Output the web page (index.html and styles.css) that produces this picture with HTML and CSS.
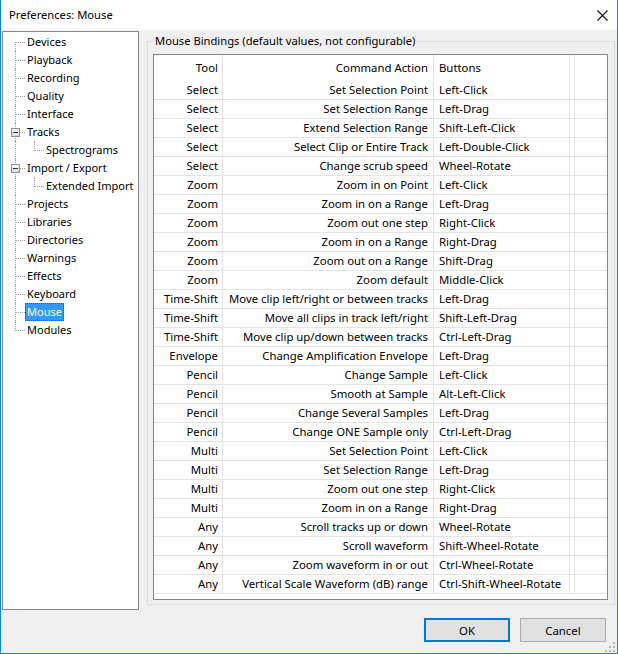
FILE: index.html
```html
<!DOCTYPE html>
<html>
<head>
<meta charset="utf-8">
<title>Preferences: Mouse</title>
<link rel="stylesheet" href="styles.css">
</head>
<body>
<div class="window">
  <div class="titlebar">
    <span class="title">Preferences: Mouse</span>
    <svg class="close" width="11" height="11" viewBox="0 0 11 11"><path d="M0.5 0.5 L10.5 10.5 M10.5 0.5 L0.5 10.5" stroke="#111" stroke-width="1.1" fill="none"/></svg>
  </div>
  <div class="main">
    <div class="tree">
      <div class="node first"><span class="h"></span><span class="lbl">Devices</span></div>
      <div class="node"><span class="h"></span><span class="lbl">Playback</span></div>
      <div class="node"><span class="h"></span><span class="lbl">Recording</span></div>
      <div class="node"><span class="h"></span><span class="lbl">Quality</span></div>
      <div class="node"><span class="h"></span><span class="lbl">Interface</span></div>
      <div class="node"><span class="h"></span><span class="box"></span><span class="lbl">Tracks</span></div>
      <div class="node child"><span class="elbow"></span><span class="lbl">Spectrograms</span></div>
      <div class="node"><span class="h"></span><span class="box"></span><span class="lbl">Import / Export</span></div>
      <div class="node child"><span class="elbow"></span><span class="lbl">Extended Import</span></div>
      <div class="node"><span class="h"></span><span class="lbl">Projects</span></div>
      <div class="node"><span class="h"></span><span class="lbl">Libraries</span></div>
      <div class="node"><span class="h"></span><span class="lbl">Directories</span></div>
      <div class="node"><span class="h"></span><span class="lbl">Warnings</span></div>
      <div class="node"><span class="h"></span><span class="lbl">Effects</span></div>
      <div class="node"><span class="h"></span><span class="lbl">Keyboard</span></div>
      <div class="node"><span class="h"></span><span class="lbl sel">Mouse</span></div>
      <div class="node last"><span class="h"></span><span class="lbl">Modules</span></div>
    </div>
    <fieldset class="group">
      <legend>Mouse Bindings (default values, not configurable)</legend>
      <div class="list">
        <div class="grid">
          <div class="c t hd">Tool</div><div class="c a hd">Command Action</div><div class="c b hd">Buttons</div><div class="c x hd"></div><div class="c y hd"></div>

          <div class="c t">Select</div><div class="c a">Set Selection Point</div><div class="c b">Left-Click</div><div class="c x"></div><div class="c y"></div>
          <div class="c t">Select</div><div class="c a">Set Selection Range</div><div class="c b">Left-Drag</div><div class="c x"></div><div class="c y"></div>
          <div class="c t">Select</div><div class="c a">Extend Selection Range</div><div class="c b">Shift-Left-Click</div><div class="c x"></div><div class="c y"></div>
          <div class="c t">Select</div><div class="c a">Select Clip or Entire Track</div><div class="c b">Left-Double-Click</div><div class="c x"></div><div class="c y"></div>
          <div class="c t">Select</div><div class="c a">Change scrub speed</div><div class="c b">Wheel-Rotate</div><div class="c x"></div><div class="c y"></div>
          <div class="c t">Zoom</div><div class="c a">Zoom in on Point</div><div class="c b">Left-Click</div><div class="c x"></div><div class="c y"></div>
          <div class="c t">Zoom</div><div class="c a">Zoom in on a Range</div><div class="c b">Left-Drag</div><div class="c x"></div><div class="c y"></div>
          <div class="c t">Zoom</div><div class="c a">Zoom out one step</div><div class="c b">Right-Click</div><div class="c x"></div><div class="c y"></div>
          <div class="c t">Zoom</div><div class="c a">Zoom in on a Range</div><div class="c b">Right-Drag</div><div class="c x"></div><div class="c y"></div>
          <div class="c t">Zoom</div><div class="c a">Zoom out on a Range</div><div class="c b">Shift-Drag</div><div class="c x"></div><div class="c y"></div>
          <div class="c t">Zoom</div><div class="c a">Zoom default</div><div class="c b">Middle-Click</div><div class="c x"></div><div class="c y"></div>
          <div class="c t">Time-Shift</div><div class="c a">Move clip left/right or between tracks</div><div class="c b">Left-Drag</div><div class="c x"></div><div class="c y"></div>
          <div class="c t">Time-Shift</div><div class="c a">Move all clips in track left/right</div><div class="c b">Shift-Left-Drag</div><div class="c x"></div><div class="c y"></div>
          <div class="c t">Time-Shift</div><div class="c a">Move clip up/down between tracks</div><div class="c b">Ctrl-Left-Drag</div><div class="c x"></div><div class="c y"></div>
          <div class="c t">Envelope</div><div class="c a">Change Amplification Envelope</div><div class="c b">Left-Drag</div><div class="c x"></div><div class="c y"></div>
          <div class="c t">Pencil</div><div class="c a">Change Sample</div><div class="c b">Left-Click</div><div class="c x"></div><div class="c y"></div>
          <div class="c t">Pencil</div><div class="c a">Smooth at Sample</div><div class="c b">Alt-Left-Click</div><div class="c x"></div><div class="c y"></div>
          <div class="c t">Pencil</div><div class="c a">Change Several Samples</div><div class="c b">Left-Drag</div><div class="c x"></div><div class="c y"></div>
          <div class="c t">Pencil</div><div class="c a">Change ONE Sample only</div><div class="c b">Ctrl-Left-Drag</div><div class="c x"></div><div class="c y"></div>
          <div class="c t">Multi</div><div class="c a">Set Selection Point</div><div class="c b">Left-Click</div><div class="c x"></div><div class="c y"></div>
          <div class="c t">Multi</div><div class="c a">Set Selection Range</div><div class="c b">Left-Drag</div><div class="c x"></div><div class="c y"></div>
          <div class="c t">Multi</div><div class="c a">Zoom out one step</div><div class="c b">Right-Click</div><div class="c x"></div><div class="c y"></div>
          <div class="c t">Multi</div><div class="c a">Zoom in on a Range</div><div class="c b">Right-Drag</div><div class="c x"></div><div class="c y"></div>
          <div class="c t">Any</div><div class="c a">Scroll tracks up or down</div><div class="c b">Wheel-Rotate</div><div class="c x"></div><div class="c y"></div>
          <div class="c t">Any</div><div class="c a">Scroll waveform</div><div class="c b">Shift-Wheel-Rotate</div><div class="c x"></div><div class="c y"></div>
          <div class="c t">Any</div><div class="c a">Zoom waveform in or out</div><div class="c b">Ctrl-Wheel-Rotate</div><div class="c x"></div><div class="c y"></div>
          <div class="c t">Any</div><div class="c a">Vertical Scale Waveform (dB) range</div><div class="c b">Ctrl-Shift-Wheel-Rotate</div><div class="c x"></div><div class="c y"></div>
        </div>
      </div>
    </fieldset>
  </div>
  <div class="footer">
    <button class="btn default">OK</button>
    <button class="btn">Cancel</button>
  </div>
  <svg class="grip" width="12" height="12" viewBox="0 0 12 12">
    <g fill="#b8b8b8">
      <rect x="10" y="2" width="2" height="2"/>
      <rect x="6" y="6" width="2" height="2"/><rect x="10" y="6" width="2" height="2"/>
      <rect x="2" y="10" width="2" height="2"/><rect x="6" y="10" width="2" height="2"/><rect x="10" y="10" width="2" height="2"/>
    </g>
  </svg>
</div>
</body>
</html>
```
FILE: styles.css
```css
* { box-sizing: border-box; }
html, body { margin: 0; padding: 0; }
body {
  font-family: "Noto Sans", "Liberation Sans", sans-serif;
  font-size: 11px;
  color: #000;
  background: #fff;
}
.window {
  position: relative;
  width: 618px;
  height: 654px;
  background: #f0f0f0;
  border-left: 1px solid #1a83d8;
  border-right: 1px solid #1a83d8;
  border-bottom: 1px solid #1a83d8;
  display: flex;
  flex-direction: column;
}
.titlebar {
  height: 30px;
  background: #fff;
  display: flex;
  align-items: center;
  justify-content: space-between;
  padding: 0 9px 0 8px;
  flex: none;
}
.title { font-size: 11.2px; line-height: 16px; }
.close { display: block; }

.main {
  height: 580px;
  display: flex;
  align-items: flex-start;
  flex: none;
}
.tree {
  width: 137px;
  height: 579px;
  margin: 1px 0 0 1px;
  background: #fff;
  border: 1px solid #828790;
  padding-top: 1px;
}
.node {
  position: relative;
  height: 18px;
  padding-left: 22px;
  display: flex;
  align-items: center;
}
.node::before {
  content: "";
  position: absolute;
  left: 12px;
  top: 0;
  height: 18px;
  border-left: 1px dotted #a0a0a0;
}
.node.first::before { top: 9px; height: 9px; }
.node.last::before { height: 10px; }
.node .h {
  position: absolute;
  left: 13px;
  top: 9px;
  width: 9px;
  border-top: 1px dotted #a0a0a0;
}
.node .box {
  position: absolute;
  left: 8px;
  top: 5px;
  width: 9px;
  height: 9px;
  border: 1px solid #919191;
  background: linear-gradient(#ffffff, #dadada);
}
.node .box::after {
  content: "";
  position: absolute;
  left: 1px;
  top: 3px;
  width: 5px;
  height: 1px;
  background: #333;
}
.node.child { padding-left: 41px; }
.node .elbow {
  position: absolute;
  left: 31px;
  top: 0;
  width: 10px;
  height: 10px;
  border-left: 1px dotted #a0a0a0;
  border-bottom: 1px dotted #a0a0a0;
}
.lbl {
  height: 18px;
  line-height: 18px;
  padding: 0 2px;
  white-space: nowrap;
}
.lbl.sel {
  background: #3399ff;
  color: #fff;
  outline: 1px dotted #7a4a10;
  outline-offset: -1px;
}

.group {
  margin: 3px 0 0 8px;
  padding: 0 6px 4px 5px;
  width: 468px;
  height: 572px;
  border: 1px solid #dcdcdc;
  min-width: 0;
}
.group legend {
  padding: 0 1px;
  margin-left: 1px;
  line-height: 16px;
  font-size: 11.2px;
}
.list {
  margin-top: 5px;
  height: 546px;
  background: #fff;
  border: 1px solid #828790;
  font-size: 11.35px;
}
.grid {
  display: grid;
  grid-template-columns: 69px 211px 136px 5px 1fr;
}
.c {
  height: 19px;
  line-height: 18px;
  border-right: 1px solid #e3e3e3;
  border-bottom: 1px solid #e3e3e3;
  white-space: nowrap;
  overflow: hidden;
}
.c.hd {
  height: 26px;
  line-height: 26px;
  border-bottom: none;
}
.c.t { text-align: right; padding-right: 4px; }
.c.a { text-align: right; padding-right: 5px; }
.c.b { text-align: left; padding-left: 5px; }
.c.y { border-right: none; }

.footer {
  display: flex;
  justify-content: flex-end;
  gap: 10px;
  padding: 8px 11px 0 0;
}
.btn {
  width: 86px;
  height: 24px;
  margin: 0;
  padding: 0;
  font-family: "Noto Sans", "Liberation Sans", sans-serif;
  font-size: 11.35px;
  color: #000;
  background: #e1e1e1;
  border: 1px solid #adadad;
}
.btn.default { border: 2px solid #0078d7; }
.grip {
  position: absolute;
  right: 2px;
  bottom: 1px;
}
```
